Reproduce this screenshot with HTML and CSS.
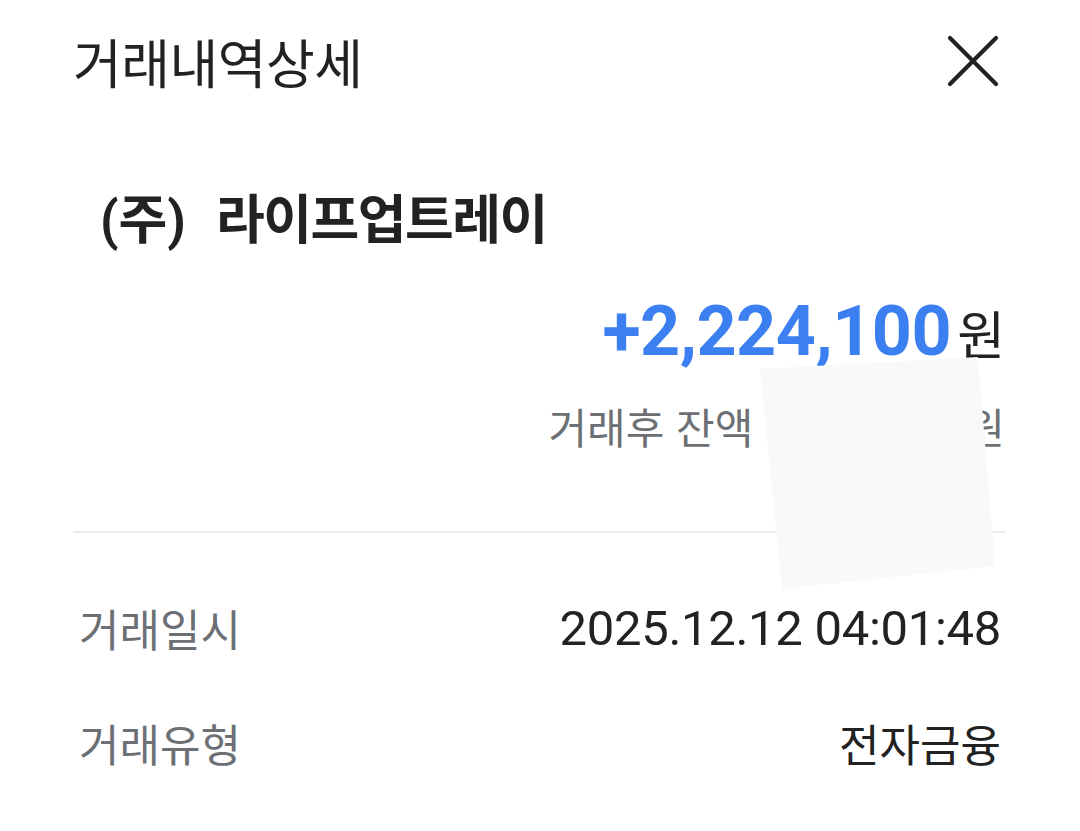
FILE: index.html
```html
<!DOCTYPE html>
<html lang="ko">
<head>
<meta charset="utf-8">
<link rel="stylesheet" href="styles.css">
</head>
<body>
<div class="page">
  <header class="header">
    <h1 class="title">거래내역상세</h1>
    <svg class="close" width="52" height="52" viewBox="0 0 52 52" aria-label="닫기">
      <path d="M3 3 L49 49 M49 3 L3 49" stroke="#222" stroke-width="4.2" stroke-linecap="round" fill="none"/>
    </svg>
  </header>
  <section class="summary">
    <div class="company"><span class="corp">(주)</span><span class="name">라이프업트레이</span></div>
    <div class="amount-row">
      <span class="amount">+2,224,100</span><span class="won">원</span>
    </div>
    <div class="balance-row">
      <span class="balance-label">거래후 잔액</span><span class="balance-hidden"></span><span class="balance-won">원</span>
    </div>
  </section>
  <hr class="divider">
  <dl class="details">
    <div class="detail-row">
      <dt>거래일시</dt>
      <dd class="num">2025.12.12 04:01:48</dd>
    </div>
    <div class="detail-row">
      <dt>거래유형</dt>
      <dd>전자금융</dd>
    </div>
  </dl>
  <div class="redact"></div>
</div>
</body>
</html>
```

FILE: styles.css
```css
html, body {
  margin: 0;
  padding: 0;
  background: #ffffff;
}
body {
  font-family: Roboto, "Noto Sans CJK KR", sans-serif;
  color: #222222;
}
.page {
  position: relative;
  width: 1080px;
  height: 831px;
  overflow: hidden;
  box-sizing: border-box;
  padding: 0 75px 0 73px;
}
.header {
  display: flex;
  justify-content: space-between;
  align-items: center;
  height: 126px;
  padding-right: 6px;
}
.title {
  margin: 0;
  font-family: "Noto Sans CJK KR", sans-serif;
  font-weight: 400;
  font-size: 53px;
  line-height: 60px;
  letter-spacing: -0.5px;
  color: #222222;
  margin-top: -4px;
}
.close {
  display: block;
  margin-top: -4px;
}
.summary {
  display: flex;
  flex-direction: column;
}
.company {
  display: flex;
  align-items: baseline;
  gap: 30px;
  margin-top: 60px;
  padding-left: 27px;
  font-weight: 700;
  font-size: 53px;
  line-height: 70px;
  color: #222222;
}
.company .name {
  letter-spacing: -1.5px;
}
.amount-row {
  display: flex;
  justify-content: flex-end;
  align-items: baseline;
  margin-top: 35px;
  line-height: 80px;
}
.amount {
  font-weight: 700;
  font-size: 70px;
  color: #3b7ff1;
  letter-spacing: -0.5px;
}
.won {
  font-family: "Noto Sans CJK KR", sans-serif;
  font-size: 52px;
  margin-left: 6px;
  color: #222222;
}
.balance-row {
  display: flex;
  justify-content: flex-end;
  align-items: baseline;
  margin-top: 25px;
  font-family: "Noto Sans CJK KR", sans-serif;
  font-size: 42px;
  line-height: 56px;
  color: #6c6f74;
}
.balance-hidden {
  display: inline-block;
  width: 213px;
}
.divider {
  margin: 77px 0 0 0;
  border: none;
  height: 2px;
  background: #ececec;
}
.details {
  margin: 59px 0 0 0;
  display: flex;
  flex-direction: column;
  gap: 43px;
}
.detail-row {
  display: flex;
  justify-content: space-between;
  align-items: center;
  height: 72px;
}
.detail-row dt {
  padding-left: 6px;
  font-family: "Noto Sans CJK KR", sans-serif;
  font-size: 44px;
  color: #6c6f74;
}
.detail-row dd {
  margin: 0;
  font-family: "Noto Sans CJK KR", sans-serif;
  font-size: 44px;
  color: #222222;
  padding-right: 4px;
}
.detail-row dd.num {
  font-family: Roboto, sans-serif;
  font-size: 49px;
  letter-spacing: -0.3px;
}
.redact {
  position: absolute;
  left: 758px;
  top: 356px;
  width: 240px;
  height: 234px;
  background: #f9f9f9;
  clip-path: polygon(2px 13px, 220px 1px, 237px 210px, 24px 233px);
}
```
